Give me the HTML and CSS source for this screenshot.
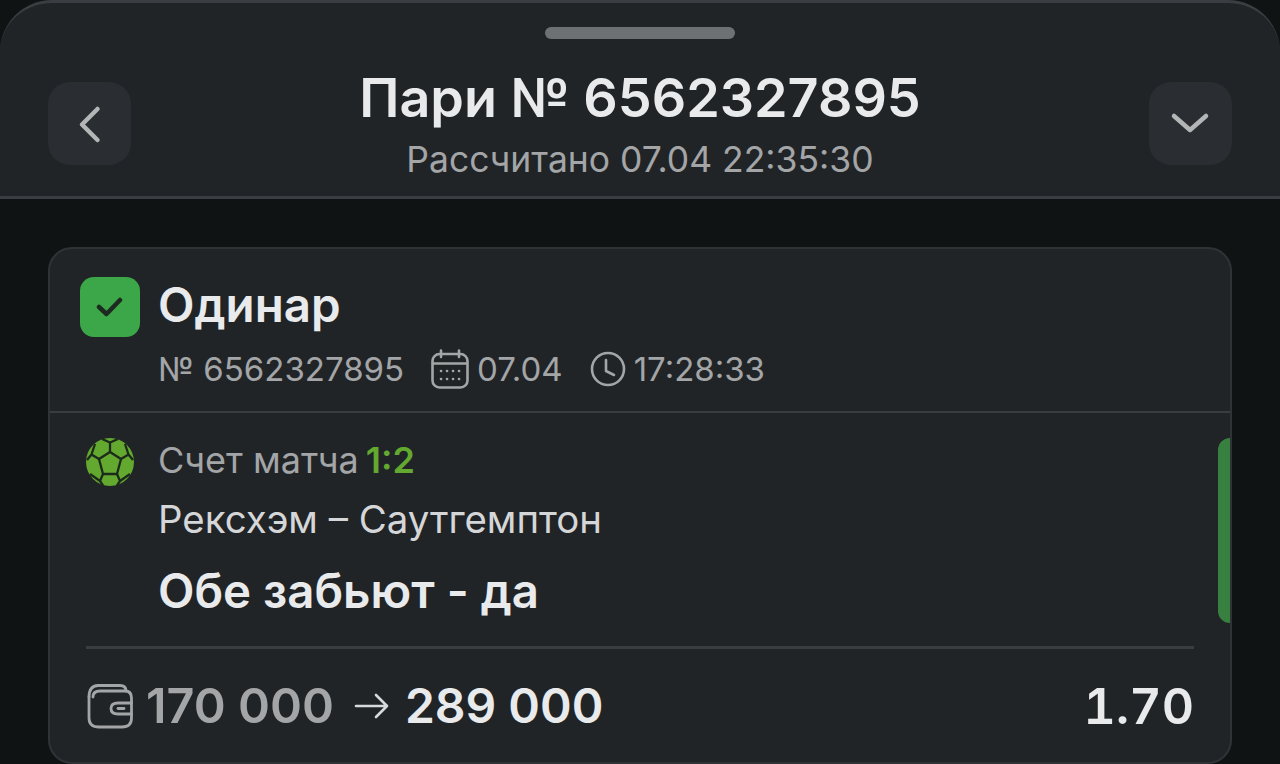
FILE: index.html
```html
<!DOCTYPE html>
<html>
<head>
<title>Пари № 6562327895</title>
<link rel="stylesheet" href="styles.css">
</head>
<body>

<header class="sheet-head">
  <div class="grabber"></div>
  <div class="head-row">
    <button class="square-btn" type="button" aria-label="Назад">
      <svg width="30" height="40" viewBox="0 0 30 40"><path d="M22.500 5 L7 20.500 L22.500 36" fill="none" stroke="#b3b5b6" stroke-width="4.500" stroke-linecap="round" stroke-linejoin="round"/></svg>
    </button>
    <div class="head-text">
      <h1 class="head-title">Пари № 6562327895</h1>
      <div class="head-sub">Рассчитано 07.04 22:35:30</div>
    </div>
    <button class="square-btn" type="button" aria-label="Свернуть">
      <svg width="40" height="30" viewBox="0 0 40 30"><path d="M4 7 L20 21 L36 7" fill="none" stroke="#b3b5b6" stroke-width="4.500" stroke-linecap="round" stroke-linejoin="round"/></svg>
    </button>
  </div>
</header>

<main class="card">
  <section class="bet-top">
    <div class="bet-type">
      <span class="status-box">
        <svg width="28" height="22" viewBox="0 0 28 22"><path d="M3 11 L10.500 18 L24 4" fill="none" stroke="#1d2a1f" stroke-width="4.500" stroke-linecap="round" stroke-linejoin="round"/></svg>
      </span>
      <span class="bet-name">Одинар</span>
    </div>
    <div class="bet-meta">
      <span>№ 6562327895</span>
      <span class="meta-item">
        <svg width="38" height="40" viewBox="0 0 38 40" fill="none" stroke="#a3a5a7" stroke-width="2.600" stroke-linecap="round">
          <rect x="1.500" y="5" width="35" height="33.500" rx="7"/>
          <path d="M2 14.500 H36 M10 1.500 V8 M28 1.500 V8"/>
          <path d="M10 22 H10.100 M16 22 H16.100 M22 22 H22.100 M28 22 H28.100 M10 30 H10.100 M16 30 H16.100 M22 30 H22.100 M28 30 H28.100"/>
        </svg>
        07.04
      </span>
      <span class="meta-item">
        <svg width="36" height="36" viewBox="0 0 36 36" fill="none" stroke="#a3a5a7" stroke-width="2.600" stroke-linecap="round" stroke-linejoin="round">
          <circle cx="18" cy="18" r="16"/>
          <path d="M16 9 V20 L24 24"/>
        </svg>
        17:28:33
      </span>
    </div>
  </section>

  <section class="event">
    <svg class="ball" width="48" height="48" viewBox="0 0 48 48">
      <circle cx="24" cy="24" r="24" fill="#63a92f"/>
      <g fill="none" stroke="#1c2a1c" stroke-width="2.300" stroke-linejoin="round">
        <path d="M24 14 L35 21 L31 36 H17 L13 21 Z"/>
        <path d="M24 14 V4.500 L16 1 M24 4.500 L32 1"/>
        <path d="M35 21 L42.500 16.500 L39 6 M42.500 16.500 L47 22"/>
        <path d="M13 21 L5.500 16.500 L9 6 M5.500 16.500 L1 22"/>
        <path d="M31 36 L34 43 L44 36 M34 43 L31 47.500"/>
        <path d="M17 36 L14 43 L4 36 M14 43 L17 47.500"/>
      </g>
    </svg>
    <div class="event-body">
      <div class="score">Счет матча <b>1:2</b></div>
      <div class="teams">Рексхэм – Саутгемптон</div>
      <div class="market">Обе забьют - да</div>
    </div>
    <span class="win-bar"></span>
  </section>

  <section class="bet-foot">
    <div class="amounts">
      <svg class="wallet" width="46" height="46" viewBox="0 0 46 46" fill="none" stroke="#a3a5a7" stroke-width="2.800" stroke-linecap="round" stroke-linejoin="round">
        <path d="M2 14 Q2 3 11 2.500 H33 Q39 2.500 39 8"/>
        <path d="M6 14 Q6 8 13 8 H38 Q44.500 8 44.500 15 V20 M44.500 31 V35 Q44.500 44 35 44 H12 Q2 44 2 35 V14"/>
        <path d="M44.500 20 H31 Q24 20 24 25.500 Q24 31 31 31 H44.500 V20"/>
        <path d="M31 25.500 H37"/>
      </svg>
      <span class="stake">170 000</span>
      <svg class="arrow" width="36" height="28" viewBox="0 0 36 28" fill="none" stroke="#d8d9da" stroke-width="2.600" stroke-linecap="round" stroke-linejoin="round"><path d="M2 14 H33 M22 3 L33 14 L22 25"/></svg>
      <span class="payout">289 000</span>
    </div>
    <span class="coef">1.70</span>
  </section>
</main>

</body>
</html>
```

FILE: styles.css
```css
html, body {
  margin: 0;
  height: 764px;
  overflow: hidden;
}
body {
  background-color: #101314;
  color: #e9eaeb;
  font-family: Inter, "Liberation Sans", sans-serif;
}

/* Top sheet header */
.sheet-head {
  box-sizing: border-box;
  height: 199px;
  background-color: #212427;
  border-top: 3px solid #3a3e42;
  border-bottom: 3px solid #3a3e42;
  border-radius: 52px 52px 0 0;
  padding: 24px 48px 0;
}
.grabber {
  width: 190px;
  height: 12px;
  margin: 0 auto;
  border-radius: 6px;
  background-color: #6e7174;
}
.head-row {
  display: flex;
  justify-content: space-between;
  margin-top: 43px;
}
.square-btn {
  display: flex;
  align-items: center;
  justify-content: center;
  width: 83px;
  height: 83px;
  padding: 0;
  border: none;
  border-radius: 22px;
  background-color: #2a2d31;
}
.head-text {
  margin-top: -14px;
  text-align: center;
}
.head-title {
  margin: 0;
  font-size: 53.900px;
  line-height: 60px;
  font-weight: 600;
}
.head-sub {
  margin-top: 12px;
  font-size: 35.500px;
  line-height: 40px;
  color: #a3a5a7;
}

/* Bet card */
.card {
  position: relative;
  box-sizing: border-box;
  height: 517px;
  margin: 48px 48px 0;
  overflow: hidden;
  background-color: #212427;
  border: 2px solid #303336;
  border-radius: 24px;
}
.bet-top {
  height: 164px;
  box-sizing: border-box;
  padding: 28px 0 0 30px;
  border-bottom: 2px solid #3a3d40;
}
.bet-type {
  display: flex;
  align-items: flex-start;
  gap: 18px;
}
.status-box {
  display: flex;
  align-items: center;
  justify-content: center;
  width: 60px;
  height: 60px;
  border-radius: 14px;
  background-color: #3ba748;
}
.bet-name {
  font-size: 47.500px;
  line-height: 56px;
  font-weight: 600;
}
.bet-meta {
  display: flex;
  align-items: center;
  gap: 27px;
  margin: 10px 0 0 78px;
  font-size: 33px;
  line-height: 44px;
  color: #a3a5a7;
}
.meta-item {
  display: flex;
  align-items: center;
  gap: 8px;
}

.event {
  position: relative;
  display: flex;
  height: 233px;
  box-sizing: border-box;
  padding: 25px 0 0 36px;
}
.ball {
  flex-shrink: 0;
}
.event-body {
  margin-left: 24px;
}
.score {
  font-size: 36px;
  line-height: 44px;
  color: #a3a5a7;
}
.score b {
  margin-left: -3px;
  color: #63a92f;
  font-weight: 600;
}
.teams {
  margin-top: 15px;
  font-size: 38.400px;
  line-height: 44px;
  color: #d5d6d7;
}
.market {
  margin-top: 24px;
  font-size: 47.400px;
  line-height: 52px;
  font-weight: 600;
}
.win-bar {
  position: absolute;
  top: 25px;
  right: 0;
  width: 12px;
  height: 185px;
  border-radius: 12px 0 0 12px;
  background-color: #38803f;
}

.bet-foot {
  display: flex;
  align-items: center;
  justify-content: space-between;
  margin: 0 36px;
  padding-top: 29px;
  border-top: 3px solid #3a3d40;
}
.amounts {
  display: flex;
  align-items: center;
  gap: 13px;
}
.wallet {
  margin-left: 1px;
}
.stake {
  font-size: 48.500px;
  line-height: 56px;
  font-weight: 600;
  color: #a3a5a7;
}
.arrow {
  margin: 0 2px 0 7px;
}
.payout {
  font-size: 48px;
  line-height: 56px;
  font-weight: 600;
}
.coef {
  font-size: 50px;
  line-height: 56px;
  font-weight: 600;
  font-feature-settings: "tnum";
}
```
